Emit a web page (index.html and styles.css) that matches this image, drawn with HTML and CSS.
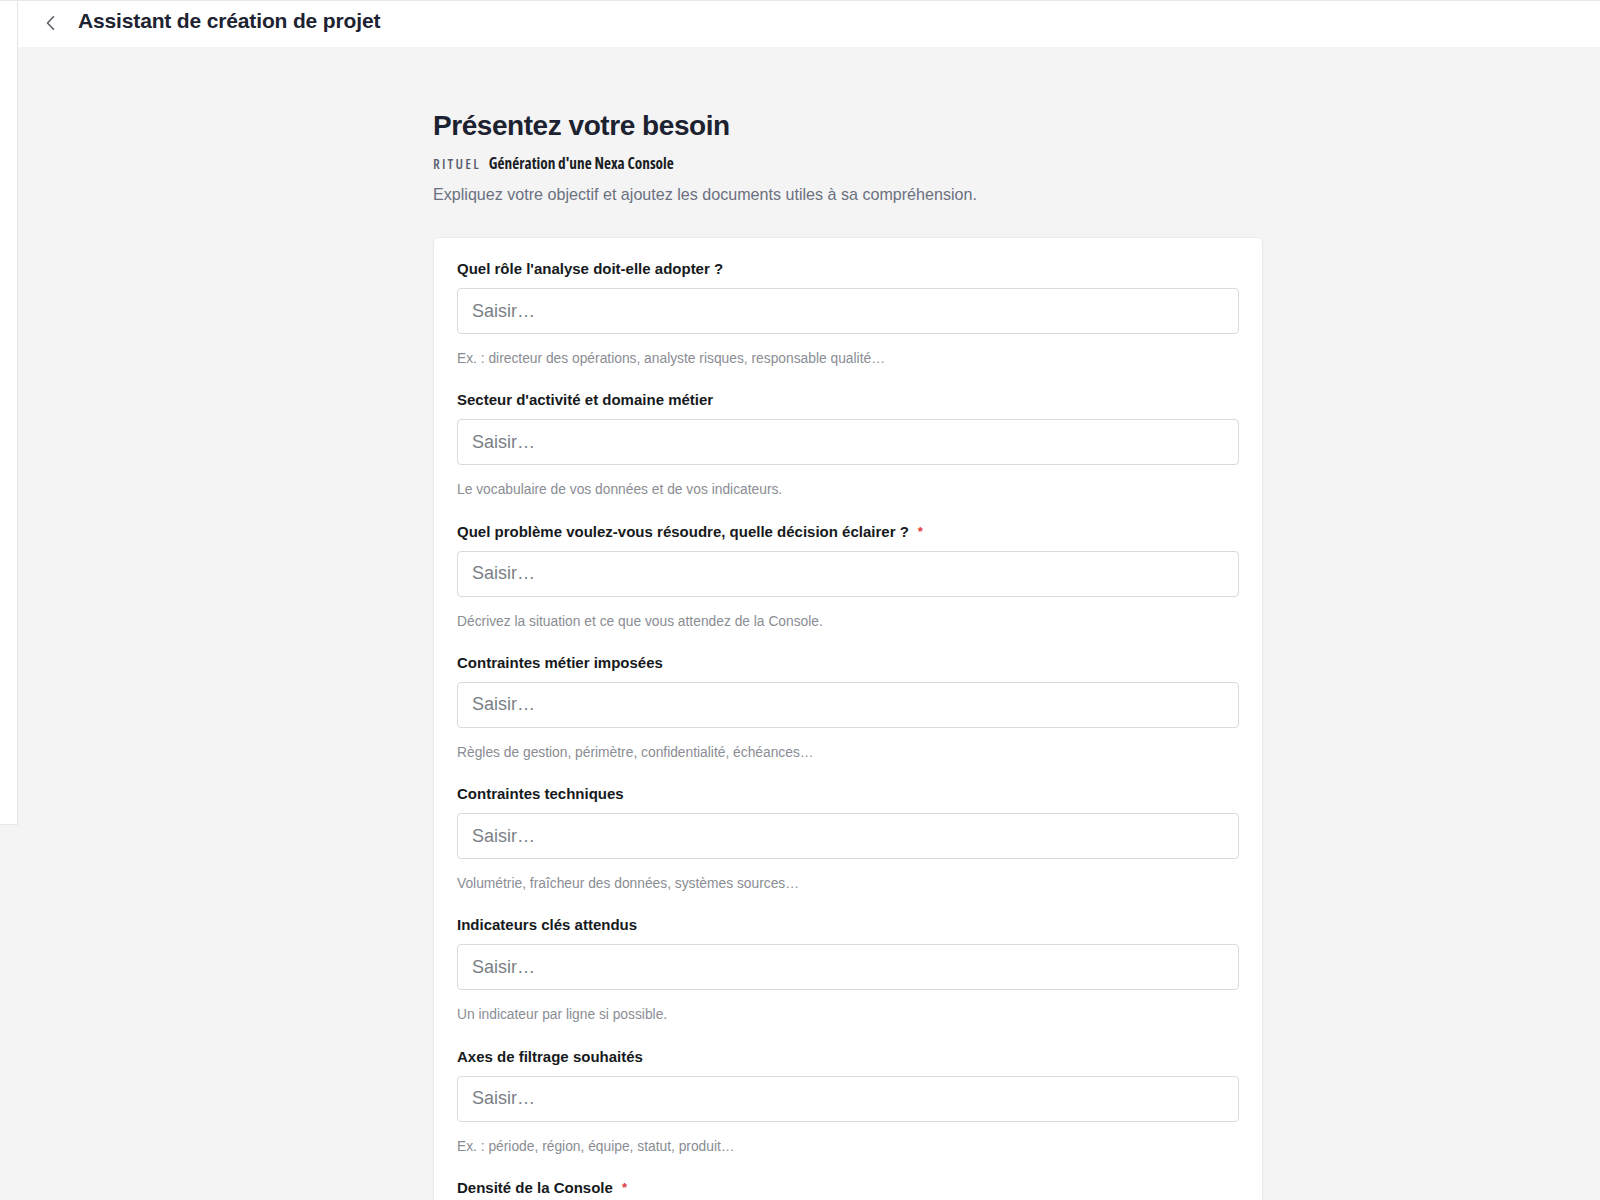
FILE: index.html
```html
<!DOCTYPE html>
<html lang="fr">
<head>
<meta charset="utf-8">
<title>Assistant de création de projet</title>
<link rel="stylesheet" href="styles.css">
</head>
<body>
<div class="app">
  <aside class="sidebar"></aside>
  <div class="main">
    <header class="topbar">
      <button class="back" type="button" aria-label="Retour">
        <svg width="16" height="16" viewBox="0 0 16 16" fill="none" stroke="currentColor" stroke-width="1.6" stroke-linecap="round" stroke-linejoin="round"><path d="M10.5 1.8 L4.5 8 L10.5 14.2"/></svg>
      </button>
      <h2 class="topbar-title">Assistant de création de projet</h2>
    </header>
    <section class="content">
      <div class="container">
        <h1 class="page-title">Présentez votre besoin</h1>
        <div class="ritual"><span class="ritual-tag">RITUEL</span><span class="ritual-name">Génération d'une Nexa Console</span></div>
        <p class="page-sub">Expliquez votre objectif et ajoutez les documents utiles à sa compréhension.</p>

        <form class="card">
          <div class="field">
            <label class="label">Quel rôle l'analyse doit-elle adopter ?</label>
            <input class="input" type="text" placeholder="Saisir…">
            <div class="hint">Ex. : directeur des opérations, analyste risques, responsable qualité…</div>
          </div>
          <div class="field">
            <label class="label">Secteur d'activité et domaine métier</label>
            <input class="input" type="text" placeholder="Saisir…">
            <div class="hint">Le vocabulaire de vos données et de vos indicateurs.</div>
          </div>
          <div class="field">
            <label class="label">Quel problème voulez-vous résoudre, quelle décision éclairer ?<span class="req">*</span></label>
            <input class="input" type="text" placeholder="Saisir…">
            <div class="hint">Décrivez la situation et ce que vous attendez de la Console.</div>
          </div>
          <div class="field">
            <label class="label">Contraintes métier imposées</label>
            <input class="input" type="text" placeholder="Saisir…">
            <div class="hint">Règles de gestion, périmètre, confidentialité, échéances…</div>
          </div>
          <div class="field">
            <label class="label">Contraintes techniques</label>
            <input class="input" type="text" placeholder="Saisir…">
            <div class="hint">Volumétrie, fraîcheur des données, systèmes sources…</div>
          </div>
          <div class="field">
            <label class="label">Indicateurs clés attendus</label>
            <input class="input" type="text" placeholder="Saisir…">
            <div class="hint">Un indicateur par ligne si possible.</div>
          </div>
          <div class="field">
            <label class="label">Axes de filtrage souhaités</label>
            <input class="input" type="text" placeholder="Saisir…">
            <div class="hint">Ex. : période, région, équipe, statut, produit…</div>
          </div>
          <div class="field">
            <label class="label">Densité de la Console<span class="req">*</span></label>
            <input class="input" type="text" placeholder="Saisir…">
            <div class="hint">Nombre de vues et niveau de détail souhaités.</div>
          </div>
        </form>
      </div>
    </section>
  </div>
</div>
</body>
</html>
```
FILE: styles.css
```css
* { box-sizing: border-box; }

html, body {
  margin: 0;
  padding: 0;
  background: #f4f4f4;
  font-family: "Liberation Sans", Arial, sans-serif;
  color: #1a1a1a;
}

.app {
  display: flex;
  align-items: flex-start;
  border-top: 1px solid #e8e8e8;
  min-height: 1200px;
}

.sidebar {
  flex: none;
  width: 18px;
  height: 824px;
  background: #ffffff;
  border-right: 1px solid #e6e6e6;
  border-bottom: 1px solid #e9e9e9;
}

.main {
  flex: 1;
  min-width: 0;
}

.topbar {
  height: 46px;
  background: #ffffff;
  display: flex;
  align-items: center;
  padding-left: 25px;
}

.back {
  border: 0;
  background: none;
  padding: 0;
  width: 16px;
  height: 16px;
  color: #5c5f66;
  display: flex;
  margin-right: 19px;
  margin-bottom: 2px;
}

.topbar-title {
  margin: 0 0 6px 0;
  font-size: 21px;
  line-height: 28px;
  font-weight: 700;
  color: #1d2331;
  letter-spacing: -0.15px;
}

.content {
  padding: 62px 0 0 415px;
}

.container {
  width: 830px;
}

.page-title {
  margin: 0;
  font-size: 28px;
  line-height: 34px;
  font-weight: 700;
  letter-spacing: -0.45px;
  color: #1c2230;
}

.ritual {
  margin-top: 10px;
  height: 20px;
  display: flex;
  align-items: baseline;
  font-family: "Open Sans", "Liberation Sans", sans-serif;
  font-stretch: 75%;
  font-size: 15.3px;
  line-height: 20px;
  font-weight: 700;
}

.ritual-tag {
  font-size: 14px;
  font-weight: 650;
  letter-spacing: 2.2px;
  color: #5a6070;
  margin-right: 8px;
}

.ritual-name {
  color: #1a1d24;
}

.page-sub {
  margin: 9px 0 0 0;
  font-size: 16.1px;
  line-height: 24px;
  color: #6b7080;
}

.card {
  margin-top: 31px;
  background: #ffffff;
  border: 1px solid #ebebeb;
  border-radius: 6px;
  box-shadow: 0 1px 2px rgba(0, 0, 0, 0.05);
  padding: 21px 23px 30px 23px;
}

.field {
  margin-bottom: 22.3px;
}

.label {
  display: block;
  font-size: 15px;
  line-height: 20px;
  font-weight: 700;
  color: #161a20;
  margin-bottom: 9px;
}

.req {
  color: #e03b3b;
  font-size: 13px;
  margin-left: 9px;
  vertical-align: 1px;
}

.input {
  display: block;
  width: 100%;
  height: 46px;
  border: 1px solid #dadada;
  border-radius: 4px;
  background: #ffffff;
  padding: 0 14px;
  font-family: "Liberation Sans", Arial, sans-serif;
  font-size: 18px;
  color: #1a1a1a;
  outline: none;
}

.input::placeholder {
  color: #7b7f87;
}

.hint {
  margin-top: 16px;
  font-size: 13.8px;
  line-height: 18px;
  color: #8a8d93;
}
```
